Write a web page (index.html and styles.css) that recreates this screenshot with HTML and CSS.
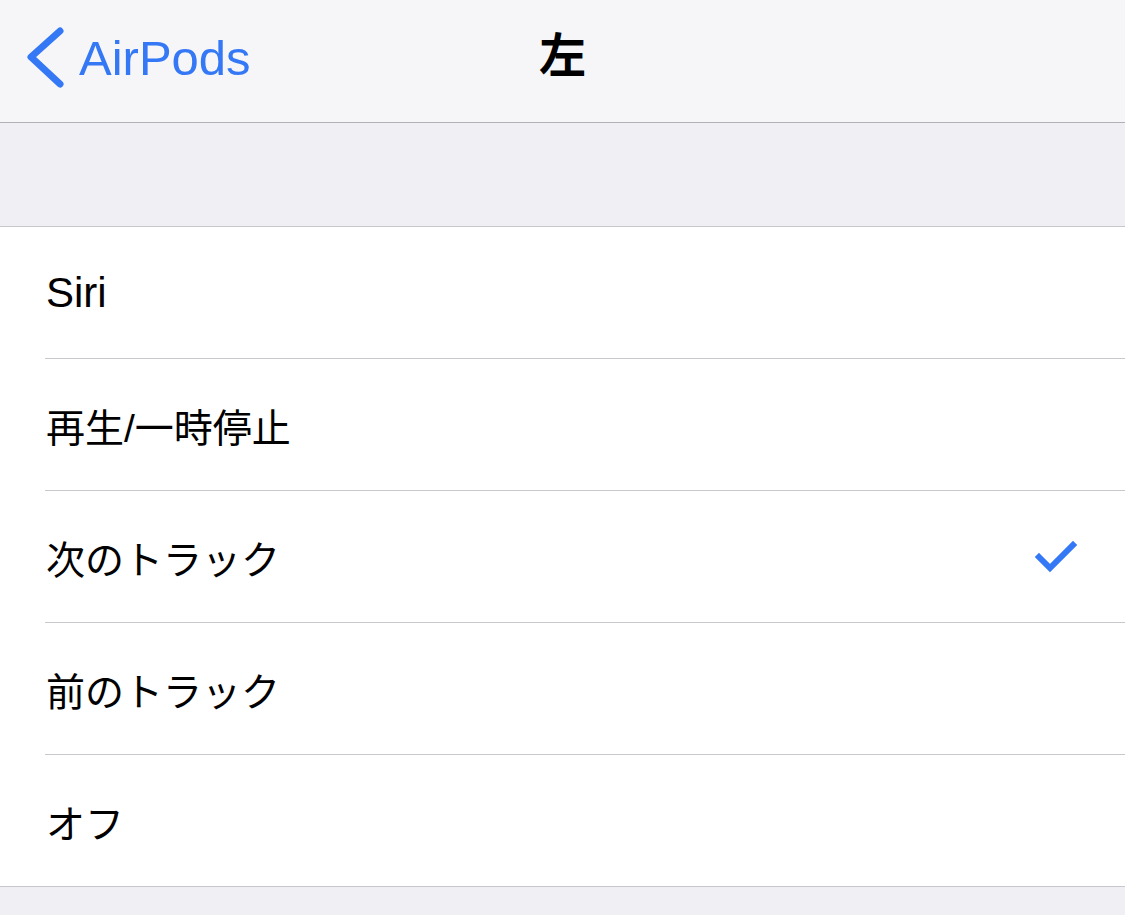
FILE: index.html
```html
<!DOCTYPE html>
<html lang="ja">
<head>
<meta charset="utf-8">
<link rel="stylesheet" href="styles.css">
</head>
<body>
<div class="screen">
  <header class="navbar">
    <div class="back">
      <svg class="chevron" width="40" height="62" viewBox="0 0 40 62">
        <polyline points="34,4 5,30 34,57" fill="none" stroke="#3478f6" stroke-width="7" stroke-linecap="round" stroke-linejoin="round"/>
      </svg>
      <span class="back-label">AirPods</span>
    </div>
    <div class="title">左</div>
  </header>
  <div class="gap"></div>
  <ul class="list">
    <li class="row"><span class="label label-latin">Siri</span></li>
    <li class="row"><span class="label">再生/一時停止</span></li>
    <li class="row"><span class="label">次のトラック</span>
      <svg class="check" width="44" height="34" viewBox="0 0 44 34">
        <polyline points="4,17 15,28 38,5" fill="none" stroke="#3478f6" stroke-width="6" stroke-linecap="square"/>
      </svg>
    </li>
    <li class="row"><span class="label">前のトラック</span></li>
    <li class="row"><span class="label">オフ</span></li>
  </ul>
  <div class="footer-gap"></div>
</div>
</body>
</html>
```
FILE: styles.css
```css
html, body {
  margin: 0;
  padding: 0;
  background: #efeff4;
}
body {
  font-family: "Liberation Sans", "Noto Sans CJK JP", sans-serif;
  color: #000;
}
.screen {
  width: 1125px;
  height: 915px;
  overflow: hidden;
  display: flex;
  flex-direction: column;
}
.navbar {
  height: 122px;
  background: #f6f6f8;
  border-bottom: 1px solid #b2b2b6;
  position: relative;
  display: flex;
  align-items: center;
  flex-shrink: 0;
}
.back {
  display: flex;
  align-items: center;
  padding-left: 26px;
  height: 100%;
}
.chevron {
  display: block;
  margin-top: -7px;
}
.back-label {
  color: #3478f6;
  font-size: 49px;
  margin-left: 13px;
  margin-top: -7px;
}
.title {
  position: absolute;
  left: 0;
  right: 0;
  top: 0;
  height: 100%;
  display: flex;
  align-items: center;
  justify-content: center;
  font-family: "Noto Sans CJK JP", sans-serif;
  font-weight: 700;
  font-size: 47px;
  margin-top: -10px;
  pointer-events: none;
}
.gap {
  height: 103px;
  background: #efeff4;
  border-bottom: 1px solid #c8c7cc;
  flex-shrink: 0;
}
.list {
  list-style: none;
  margin: 0;
  padding: 0 0 0 45px;
  background: #fff;
  border-bottom: 1px solid #c8c7cc;
  flex-shrink: 0;
}
.row {
  height: 131px;
  display: flex;
  align-items: center;
  justify-content: space-between;
  padding-right: 46px;
  border-bottom: 1px solid #c8c7cc;
}
.row:last-child {
  border-bottom: none;
}
.label {
  font-size: 39px;
  padding-left: 1px;
}
.label-latin {
  font-size: 42px;
}
.check {
  display: block;
}
.footer-gap {
  flex: 1;
  background: #efeff4;
}
```
